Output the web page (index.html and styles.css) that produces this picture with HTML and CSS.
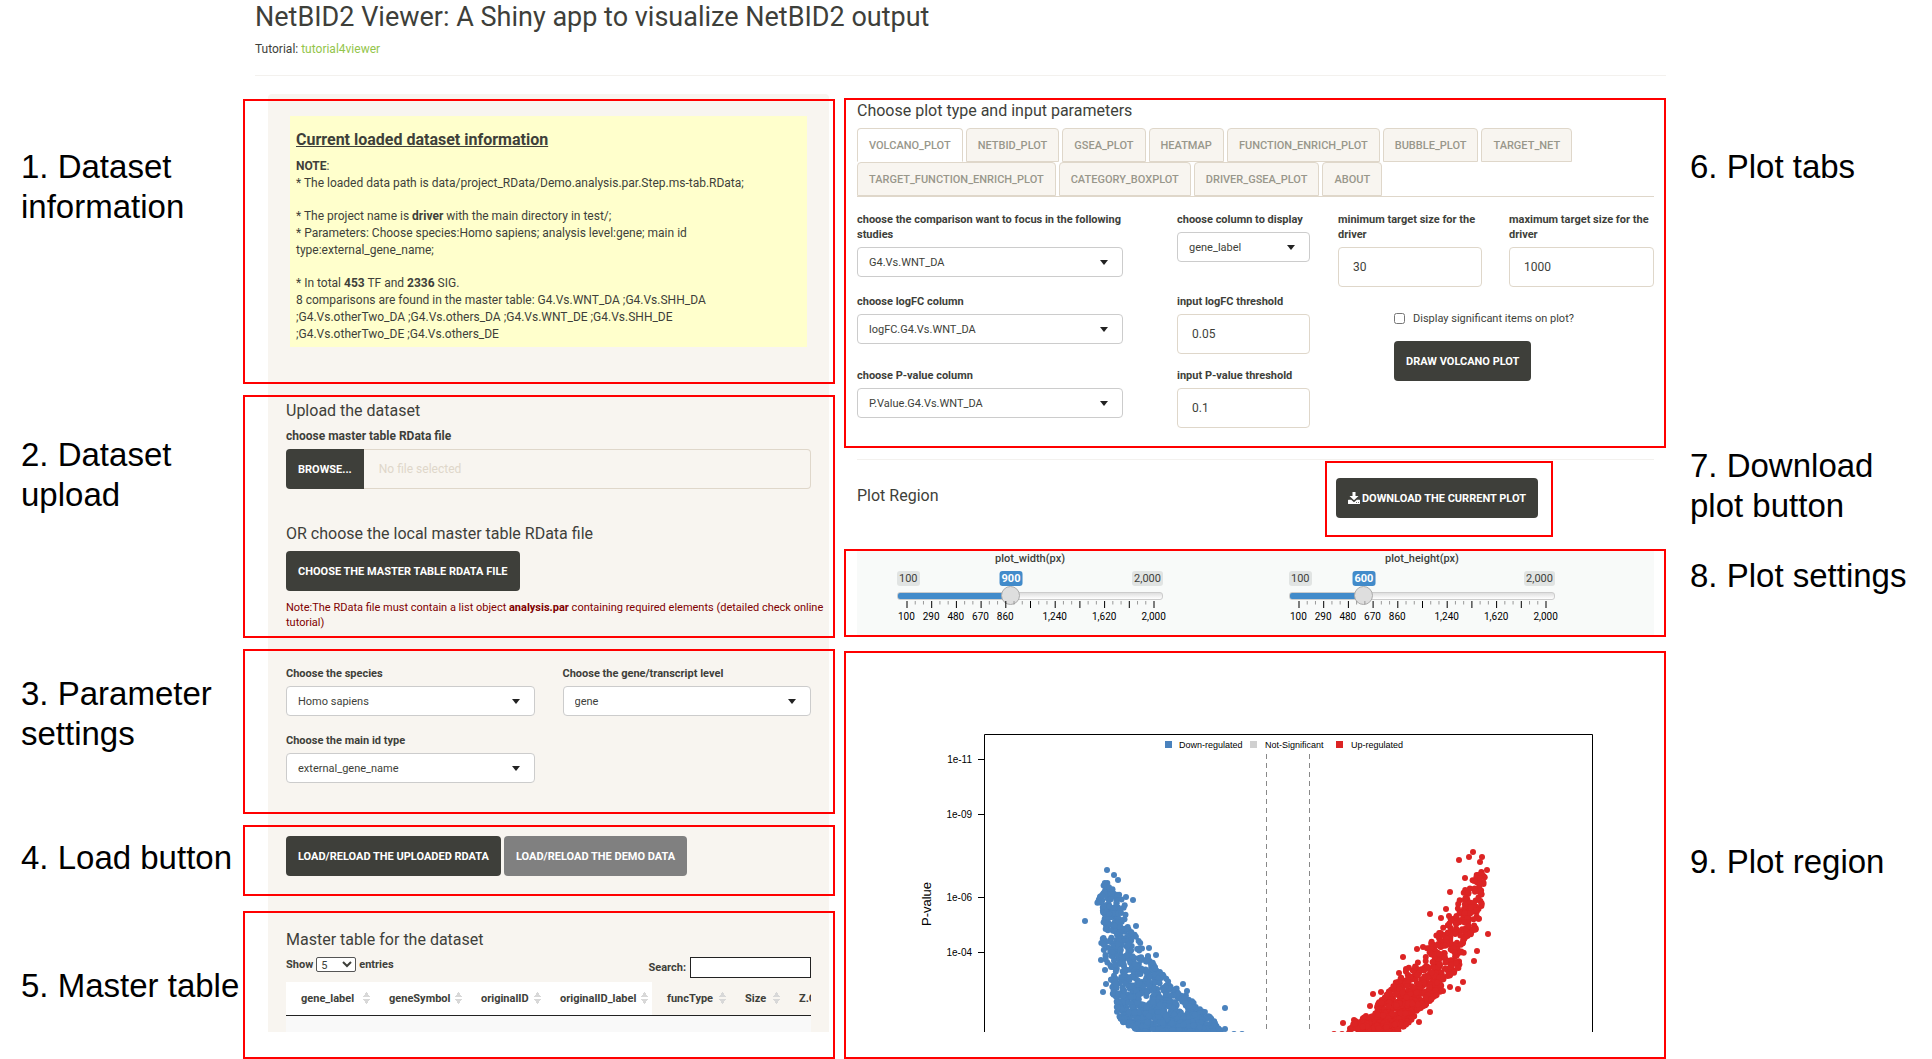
FILE: index.html
```html
<!DOCTYPE html>
<html lang="en">
<head>
<meta charset="utf-8">
<title>NetBID2 Viewer</title>
<link rel="stylesheet" href="styles.css">
</head>
<body>
<div class="page">
  <header class="top">
    <h1>NetBID2 Viewer: A Shiny app to visualize NetBID2 output</h1>
    <p class="tutorial">Tutorial: <a href="#tutorial">tutorial4viewer</a></p>
  </header>

  <aside class="captions captions-left">
    <p class="cap-1">1. Dataset<br>information</p>
    <p class="cap-2">2. Dataset<br>upload</p>
    <p class="cap-3">3. Parameter<br>settings</p>
    <p class="cap-4">4. Load button</p>
    <p class="cap-5">5. Master table</p>
  </aside>

  <main class="data">
    <div class="well"></div>
    <div class="stack">
      <section class="box box-info">
        <div class="info">
          <h2>Current loaded dataset information</h2>
          <p><b>NOTE</b>:<br>* The loaded data path is data/project_RData/Demo.analysis.par.Step.ms-tab.RData;</p>
          <p>* The project name is <b>driver</b> with the main directory in test/;<br>* Parameters: Choose species:Homo sapiens; analysis level:gene; main id type:external_gene_name;</p>
          <p>* In total <b>453</b> TF and <b>2336</b> SIG.<br>8 comparisons are found in the master table: G4.Vs.WNT_DA ;G4.Vs.SHH_DA ;G4.Vs.otherTwo_DA ;G4.Vs.others_DA ;G4.Vs.WNT_DE ;G4.Vs.SHH_DE ;G4.Vs.otherTwo_DE ;G4.Vs.others_DE</p>
        </div>
      </section>

      <section class="box box-upload">
        <h3>Upload the dataset</h3>
        <label class="file-label" for="file">choose master table RData file</label>
        <div class="file-row">
          <button class="btn btn-browse" type="button">Browse...</button>
          <input id="file" type="text" placeholder="No file selected" readonly>
        </div>
        <h3 class="local">OR choose the local master table RData file</h3>
        <button class="btn" type="button">Choose the master table RData file</button>
        <p class="note">Note:The RData file must contain a list object <b>analysis.par</b> containing required elements (detailed check online tutorial)</p>
      </section>

      <section class="box box-params">
        <div class="field">
          <label for="species">Choose the species</label>
          <div class="select"><select id="species"><option>Homo sapiens</option></select></div>
        </div>
        <div class="field">
          <label for="level">Choose the gene/transcript level</label>
          <div class="select"><select id="level"><option>gene</option></select></div>
        </div>
        <div class="field">
          <label for="idtype">Choose the main id type</label>
          <div class="select"><select id="idtype"><option>external_gene_name</option></select></div>
        </div>
      </section>

      <section class="box box-load">
        <button class="btn" type="button">Load/Reload the uploaded RData</button>
        <button class="btn btn-grey" type="button">Load/Reload the demo data</button>
      </section>

      <section class="box box-table">
        <h3>Master table for the dataset</h3>
        <div class="table-tools">
          <div class="length"><label for="len">Show</label> <select id="len"><option>5</option></select> <label for="len">entries</label></div>
          <div class="search"><label for="search">Search:</label><input id="search" type="search"></div>
        </div>
        <div class="table-clip">
          <table>
            <colgroup><col class="c1"><col class="c2"><col class="c3"><col class="c4"><col class="c5"><col class="c6"><col class="c7"></colgroup>
            <thead>
              <tr>
                <th class="white"><span>gene_label<i></i></span></th>
                <th class="white"><span>geneSymbol<i></i></span></th>
                <th class="white"><span>originalID<i></i></span></th>
                <th class="white"><span>originalID_label<i></i></span></th>
                <th><span>funcType<i></i></span></th>
                <th><span>Size<i></i></span></th>
                <th>Z.G4</th>
              </tr>
            </thead>
            <tbody><tr><td colspan="7"></td></tr></tbody>
          </table>
        </div>
      </section>
    </div>
  </main>

  <main class="plots">
    <section class="box box-tabs">
      <h3>Choose plot type and input parameters</h3>
      <nav class="tabs">
        <button type="button" class="active">VOLCANO_PLOT</button>
        <button type="button">NETBID_PLOT</button>
        <button type="button">GSEA_PLOT</button>
        <button type="button">HEATMAP</button>
        <button type="button">FUNCTION_ENRICH_PLOT</button>
        <button type="button">BUBBLE_PLOT</button>
        <button type="button">TARGET_NET</button>
        <button type="button">TARGET_FUNCTION_ENRICH_PLOT</button>
        <button type="button">CATEGORY_BOXPLOT</button>
        <button type="button">DRIVER_GSEA_PLOT</button>
        <button type="button">ABOUT</button>
      </nav>
      <form class="controls">
        <div class="field a1">
          <label for="cmp">choose the comparison want to focus in the following studies</label>
          <div class="select"><select id="cmp"><option>G4.Vs.WNT_DA</option></select></div>
        </div>
        <div class="field b1">
          <label for="col">choose column to display</label>
          <div class="select"><select id="col"><option>gene_label</option></select></div>
        </div>
        <div class="field c-min">
          <label for="min">minimum target size for the driver</label>
          <input id="min" type="text" value="30">
        </div>
        <div class="field c-max">
          <label for="max">maximum target size for the driver</label>
          <input id="max" type="text" value="1000">
        </div>
        <div class="field a2">
          <label for="fc">choose logFC column</label>
          <div class="select"><select id="fc"><option>logFC.G4.Vs.WNT_DA</option></select></div>
        </div>
        <div class="field b2">
          <label for="fct">input logFC threshold</label>
          <input id="fct" type="text" value="0.05">
        </div>
        <div class="field a3">
          <label for="pv">choose P-value column</label>
          <div class="select"><select id="pv"><option>P.Value.G4.Vs.WNT_DA</option></select></div>
        </div>
        <div class="field b3">
          <label for="pvt">input P-value threshold</label>
          <input id="pvt" type="text" value="0.1">
        </div>
        <div class="draw">
          <div class="check"><input id="sig" type="checkbox"><label for="sig">Display significant items on plot?</label></div>
          <button class="btn" type="button">Draw volcano plot</button>
        </div>
      </form>
    </section>

    <div class="plot-head">
      <h3>Plot Region</h3>
      <div class="box box-download">
        <button class="btn" type="button"><svg width="12" height="12" viewBox="0 0 12 12" aria-hidden="true"><path fill="#fff" d="M4.5 0h3v4h3L6 8.300 1.500 4h3zM.6 7.800h2.600L6 10.300l2.800-2.500h2.600c.4 0 .6.2.6.6v3c0 .4-.2.6-.6.6H.6c-.4 0-.6-.2-.6-.6v-3c0-.4.2-.6.6-.6z"/><path fill="#3e3f3a" d="M8 10.200h1v.9H8zM10 10.200h1v.9h-1z"/></svg>Download the current plot</button>
      </div>
    </div>

    <section class="box box-sliders">
      <div class="slider-bg">
        <div class="slider" style="--pos: .421">
          <label for="w">plot_width(px)</label>
          <div class="bubbles"><span>100</span><span>2,000</span><output for="w">900</output></div>
          <input id="w" type="range" min="100" max="2000" value="900">
          <svg class="ticks" viewBox="0 0 300 8" preserveAspectRatio="none" aria-hidden="true"><path class="minor" d=""/><path class="major" d=""/></svg>
          <div class="marks"><span>100</span><span>290</span><span>480</span><span>670</span><span>860</span><span></span><span>1,240</span><span></span><span>1,620</span><span></span><span>2,000</span></div>
        </div>
        <div class="slider" style="--pos: .263">
          <label for="h">plot_height(px)</label>
          <div class="bubbles"><span>100</span><span>2,000</span><output for="h">600</output></div>
          <input id="h" type="range" min="100" max="2000" value="600">
          <svg class="ticks" viewBox="0 0 300 8" preserveAspectRatio="none" aria-hidden="true"><path class="minor" d=""/><path class="major" d=""/></svg>
          <div class="marks"><span>100</span><span>290</span><span>480</span><span>670</span><span>860</span><span></span><span>1,240</span><span></span><span>1,620</span><span></span><span>2,000</span></div>
        </div>
      </div>
    </section>

    <section class="box box-plot">
      <svg class="volcano" viewBox="846 653 818 379" role="img" aria-label="Volcano plot">
        <path class="frame" d="M984.500 1040V734.500H1592.500V1040"/>
        <path class="axis" d="M978 759.500h6M978 814.500h6M978 897.500h6M978 952.500h6"/>
        <path class="cut" d="M1266.500 754V1032M1309.500 754V1032"/>
        <g class="tick-text">
          <text x="972" y="763">1e-11</text>
          <text x="972" y="818">1e-09</text>
          <text x="972" y="901">1e-06</text>
          <text x="972" y="956">1e-04</text>
        </g>
        <text class="y-title" transform="translate(931 926) rotate(-90)">P-value</text>
        <g class="legend">
          <rect x="1165" y="741" width="7" height="7" fill="#4a82bd"/><text x="1179" y="748">Down-regulated</text>
          <rect x="1250" y="741" width="7" height="7" fill="#d0d0d0"/><text x="1265" y="748">Not-Significant</text>
          <rect x="1336" y="741" width="7" height="7" fill="#dc2424"/><text x="1351" y="748">Up-regulated</text>
        </g>
        <g id="down" fill="#4a82bd"></g>
        <g id="up" fill="#dc2424"></g>
      </svg>
    </section>
  </main>

  <aside class="captions captions-right">
    <p class="cap-6">6. Plot tabs</p>
    <p class="cap-7">7. Download<br>plot button</p>
    <p class="cap-8">8. Plot settings</p>
    <p class="cap-9">9. Plot region</p>
  </aside>
</div>
<script src="plot.js"></script>
</body>
</html>
```
FILE: styles.css
```css
* { box-sizing: border-box; }

body {
  margin: 0;
  background: #fff;
  color: #3e3f3a;
  font: 12px/17px Roboto, "Liberation Sans", sans-serif;
}

h1, h2, h3, p { margin: 0; }
h1 { font-size: 27px; line-height: 34px; font-weight: 400; }
h3 { font-size: 16px; line-height: 20px; font-weight: 400; }
b { font-weight: 700; }
button, input, select { font-family: inherit; color: inherit; margin: 0; }

.page {
  display: grid;
  grid-template-columns: 243px minmax(0, 592fr) 9px minmax(0, 822fr) 266px;
  grid-template-rows: 94px auto;
}

.top {
  grid-column: 2 / 5;
  margin-left: 12px;
}
.tutorial {
  margin-top: 6px;
  padding-bottom: 17px;
  line-height: 18px;
  border-bottom: 1px solid #f3f1ee;
}
.tutorial a { color: #93c54b; text-decoration: none; }

/* Captions on both sides */
.captions {
  grid-row: 2;
  color: #000;
  font: 33px/40px "Liberation Sans", Arial, sans-serif;
  white-space: nowrap;
}
.captions-left { grid-column: 1; padding-left: 21px; }
.captions-right { grid-column: 5; padding-left: 24px; }
.cap-1, .cap-6 { margin-top: 53px; }
.cap-2 { margin-top: 208px; }
.cap-3 { margin-top: 159px; }
.cap-4 { margin-top: 84px; }
.cap-5 { margin-top: 88px; }
.cap-7 { margin-top: 259px; }
.cap-8 { margin-top: 30px; }
.cap-9 { margin-top: 246px; }

.box { border: 2px solid #f00; }

/* Left column: the well lies behind the framed sections */
.data {
  grid-column: 2;
  grid-row: 2;
  display: grid;
  grid-template-columns: minmax(0, 1fr);
}
.well {
  grid-area: 1 / 1;
  margin: 0 6px 27px 25px;
  background: #f8f5f0;
  border-radius: 4px 4px 0 0;
}
.stack {
  grid-area: 1 / 1;
  display: flex;
  flex-direction: column;
  gap: 11px;
  padding-top: 5px;
}
.stack .box { padding-left: 41px; padding-right: 22px; }

.stack .box-info { padding: 15px 26px 35px 45px; }
.info { background: #ffffcc; padding: 13px 40px 4px 6px; }
.info h2 {
  margin-bottom: 7px;
  font-size: 16px;
  line-height: 22px;
  font-weight: 700;
  text-decoration: underline;
}
.info p + p { margin-top: 16px; }

.box-upload { padding-top: 4px; padding-bottom: 6px; }
.file-label { display: block; margin: 7px 0 5px; line-height: 16px; font-weight: 700; }
.file-row { display: flex; height: 40px; margin-bottom: 35px; }
.file-row input {
  flex: 1;
  min-width: 0;
  padding: 0 15px;
  border: 1px solid #dfd7ca;
  border-left: 0;
  border-radius: 0 4px 4px 0;
  background: transparent;
  font-size: 12px;
}
.file-row input::placeholder { color: #dfd7ca; }
.local { margin-bottom: 7px; }
.note { margin: 9px -16px 0 0; font-size: 11px; line-height: 15px; color: #800000; }

.btn {
  height: 40px;
  padding: 0 12px;
  border: 0;
  border-radius: 4px;
  background: #3e3f3a;
  color: #fff;
  font-size: 11px;
  font-weight: 700;
  line-height: 15px;
  text-transform: uppercase;
  white-space: nowrap;
}
.btn-browse { border-radius: 4px 0 0 4px; }
.btn-grey { background: #808080; }

.field { display: flex; flex-direction: column; }
.field label { margin-bottom: 5px; font-size: 11px; line-height: 15px; font-weight: 700; }
.field input {
  width: 100%;
  height: 40px;
  padding: 0 14px;
  border: 1px solid #dfd7ca;
  border-radius: 4px;
  font-size: 12px;
}
.select { display: grid; align-items: center; }
.select select {
  grid-area: 1 / 1;
  width: 100%;
  height: 30px;
  padding: 0 11px;
  appearance: none;
  border: 1px solid #ccc;
  border-radius: 4px;
  background: #fff;
  font-size: 11px;
}
.select::after {
  content: "";
  grid-area: 1 / 1;
  justify-self: end;
  margin-right: 15px;
  border: 4px solid transparent;
  border-top: 5px solid #222;
  border-bottom: 0;
  pointer-events: none;
}

.box-params {
  display: grid;
  grid-template-columns: 1fr 1fr;
  gap: 17px 28px;
  padding-top: 15px;
  padding-bottom: 29px;
}
.box-load { display: flex; gap: 3px; padding-top: 9px; padding-bottom: 18px; }

.box-table { margin-top: 4px; padding-top: 17px; padding-bottom: 25px; }
.table-tools {
  display: flex;
  justify-content: space-between;
  margin: 7px 0 4px;
  font-size: 11px;
  font-weight: 700;
}
.length { display: flex; gap: 3px; line-height: 15px; }
.length select {
  width: 40px;
  height: 15px;
  padding: 0;
  border: 1px solid #555;
  border-radius: 2px;
  background: #fff;
  font-size: 11px;
}
.search { display: flex; align-items: center; gap: 4px; }
.search input { width: 121px; height: 21px; border: 1px solid #222; background: #fff; }
.table-clip { overflow: hidden; }
table { width: 560px; table-layout: fixed; border-collapse: collapse; }
.c1 { width: 88px; }
.c2 { width: 92px; }
.c3 { width: 79px; }
.c4 { width: 107px; }
.c5 { width: 78px; }
.c6 { width: 54px; }
th {
  height: 33px;
  padding: 0 4px 0 15px;
  border-bottom: 1px solid #222;
  font-size: 11px;
  font-weight: 700;
  text-align: left;
}
th.white { background: #fff; }
th span { display: flex; justify-content: space-between; align-items: center; }
th i {
  flex: none;
  width: 7px;
  height: 12px;
  background:
    conic-gradient(from 145deg at 50% 0, #d8d8d8 70deg, transparent 0) top / 7px 5px no-repeat,
    conic-gradient(from -35deg at 50% 100%, #d8d8d8 70deg, transparent 0) bottom / 7px 5px no-repeat;
}
td { height: 17px; padding: 0; background: #f9f9f9; }

/* Right column */
.plots { grid-column: 4; grid-row: 2; padding-top: 4px; }
.box-tabs { padding: 1px 10px 18px 11px; }
.tabs {
  display: flex;
  flex-wrap: wrap;
  gap: 0 3px;
  margin: 7px 0 15px;
  border-bottom: 1px solid #dfd7ca;
}
.tabs button {
  height: 34px;
  padding: 0 11px;
  border: 1px solid #dfd7ca;
  border-radius: 4px 4px 0 0;
  background: #f8f5f0;
  color: #98978b;
  font-size: 11px;
  font-weight: 500;
}
.tabs .active { background: #fff; border-bottom-color: #fff; }

.controls {
  display: grid;
  grid-template-columns: 266fr 54fr 133fr 28fr 144fr 27fr 145fr;
  row-gap: 7px;
}
.a1, .a2, .a3 { grid-column: 1; }
.b1, .b2, .b3 { grid-column: 3; }
.c-min { grid-column: 5; }
.c-max { grid-column: 7; }
.a2, .b2 { grid-row: 2; margin-bottom: 7px; }
.a3, .b3 { grid-row: 3; }
.draw { grid-column: 5 / 8; grid-row: 2 / 4; padding: 17px 0 0 56px; }
.check { display: flex; align-items: center; gap: 8px; margin-bottom: 15px; font-size: 11px; line-height: 15px; }
.check input { width: 11px; height: 11px; }

.plot-head {
  display: flex;
  justify-content: space-between;
  align-items: center;
  margin: 11px 12px 12px 13px;
  padding-top: 1px;
  border-top: 1px solid #f3f1ee;
}
.plot-head h3 { margin-bottom: 7px; }
.box-download { margin-right: 101px; padding: 15px 13px 17px 9px; }
.box-download .btn { display: flex; align-items: center; gap: 2px; }

.box-sliders { padding: 0 10px 0 11px; }
.slider-bg {
  display: grid;
  grid-template-columns: 266fr 126fr 266fr 99fr;
  padding: 0 0 11px 40px;
  background: #f8faf9;
}
.slider:last-child { grid-column: 3; }
.slider { display: flex; flex-direction: column; font-size: 10px; line-height: 15px; }
.slider label { margin-bottom: 5px; font-size: 11px; font-weight: 500; text-align: center; }
.bubbles { position: relative; display: flex; justify-content: space-between; font-size: 11px; }
.bubbles span, .bubbles output { padding: 0 2px; border-radius: 3px; background: #e1e4e3; }
.bubbles output {
  position: absolute;
  left: calc(10px + (100% - 19px) * var(--pos));
  transform: translateX(-50%);
  background: #428bca;
  color: #fff;
  font-weight: 700;
}
.slider input {
  width: 100%;
  height: 20px;
  appearance: none;
  background: transparent;
}
.slider input::-webkit-slider-runnable-track {
  height: 8px;
  border: 1px solid #ccc;
  border-radius: 3px;
  background: linear-gradient(90deg, #428bca calc(10px + (100% - 19px) * var(--pos)), transparent 0), linear-gradient(#dedede, #fff);
}
.slider input::-webkit-slider-thumb {
  appearance: none;
  width: 19px;
  height: 19px;
  margin-top: -7px;
  border: 1px solid #ababab;
  border-radius: 50%;
  background: #dedede;
}
.ticks { width: calc(100% - 19px); height: 7px; margin: -5px auto 0; overflow: visible; }
.ticks path { fill: none; stroke-width: 1px; vector-effect: non-scaling-stroke; }
.major { stroke: #000; }
.minor { stroke: #999; }
.marks { display: grid; grid-template-columns: repeat(11, 1fr); margin: 1px -3px 0; color: #000; }
.marks span { display: flex; justify-content: center; width: 100%; min-width: 0; }

.box-plot { margin-top: 14px; padding-bottom: 25px; }
.volcano { display: block; width: 100%; font-family: "Liberation Sans", Arial, sans-serif; }
.frame { fill: none; stroke: #000; }
.axis { stroke: #000; }
.cut { stroke: #888; stroke-dasharray: 5 4; }
.tick-text { font-size: 10px; text-anchor: end; }
.y-title { font-size: 13px; text-anchor: start; }
.legend { font-size: 9px; }
```
FILE: plot.js
```js
// Seeded generator so that the scatter is the same on every load
let seed = 11;
function rnd() {
  seed = (seed * 1664525 + 1013904223) % 4294967296;
  return seed / 4294967296;
}

// Each row: y, leftmost x, rightmost x, number of points in the band down to the next row
const down = [
  [882, 1104, 1108, 8], [892, 1101, 1117, 30], [902, 1097, 1125, 30], [912, 1103, 1126, 28],
  [922, 1103, 1125, 24], [932, 1102, 1133, 28], [942, 1101, 1140, 32], [952, 1103, 1145, 38],
  [962, 1106, 1153, 44], [972, 1112, 1162, 54], [982, 1107, 1169, 66], [992, 1109, 1184, 90],
  [1002, 1116, 1193, 130], [1012, 1117, 1205, 170], [1022, 1122, 1215, 210], [1033, 1142, 1222, 0]
];
const up = [
  [870, 1483, 1488, 6], [877, 1474, 1486, 14], [890, 1464, 1482, 18], [902, 1458, 1484, 24],
  [912, 1457, 1483, 28], [922, 1447, 1481, 32], [932, 1438, 1474, 34], [942, 1430, 1464, 38],
  [952, 1425, 1465, 42], [962, 1414, 1462, 50], [972, 1405, 1456, 58], [982, 1396, 1443, 72],
  [992, 1388, 1440, 88], [1002, 1378, 1430, 100], [1012, 1376, 1417, 110], [1022, 1354, 1410, 160], [1033, 1347, 1396, 0]
];
const downSingle = [[1085, 921], [1107, 870], [1114, 875], [1118, 880], [1133, 900], [1136, 926], [1156, 955], [1149, 948],
  [1183, 984], [1225, 1008], [1225, 1029], [1234, 1034], [1242, 1034], [1101, 960], [1105, 970], [1103, 992], [1106, 984], [1126, 897], [1187, 991]];
const upSingle = [[1473, 852], [1459, 860], [1469, 857], [1482, 857], [1480, 862], [1487, 870], [1465, 878], [1450, 892],
  [1446, 909], [1430, 914], [1449, 916], [1488, 934], [1441, 918], [1417, 949], [1423, 947], [1403, 957], [1477, 951],
  [1474, 961], [1406, 969], [1399, 973], [1463, 982], [1458, 989], [1450, 987], [1443, 991], [1430, 1012], [1419, 1022],
  [1366, 1016], [1343, 1023], [1354, 1020], [1373, 994], [1381, 992], [1370, 1006], [1334, 1034], [1342, 1034]];

function draw(id, bands, singles) {
  const points = singles.slice();
  for (let i = 0; i < bands.length - 1; i++) {
    const a = bands[i], b = bands[i + 1];
    for (let n = 0; n < a[3]; n++) {
      const t = rnd();
      const left = a[1] + (b[1] - a[1]) * t, right = a[2] + (b[2] - a[2]) * t;
      points.push([left + (right - left) * rnd(), a[0] + (b[0] - a[0]) * t]);
    }
  }
  document.getElementById(id).innerHTML =
    points.map(p => `<circle cx="${p[0].toFixed(1)}" cy="${p[1].toFixed(1)}" r="3"/>`).join("");
}
draw("down", down, downSingle);
draw("up", up, upSingle);

// Slider scale: a long tick every 30 units, two short ones between
let major = "", minor = "";
for (let i = 0; i <= 30; i++) {
  if (i % 3 === 0) major += `M${i * 10} 0V8`;
  else minor += `M${i * 10} 0V4`;
}
document.querySelectorAll(".major").forEach(p => p.setAttribute("d", major));
document.querySelectorAll(".minor").forEach(p => p.setAttribute("d", minor));
```
